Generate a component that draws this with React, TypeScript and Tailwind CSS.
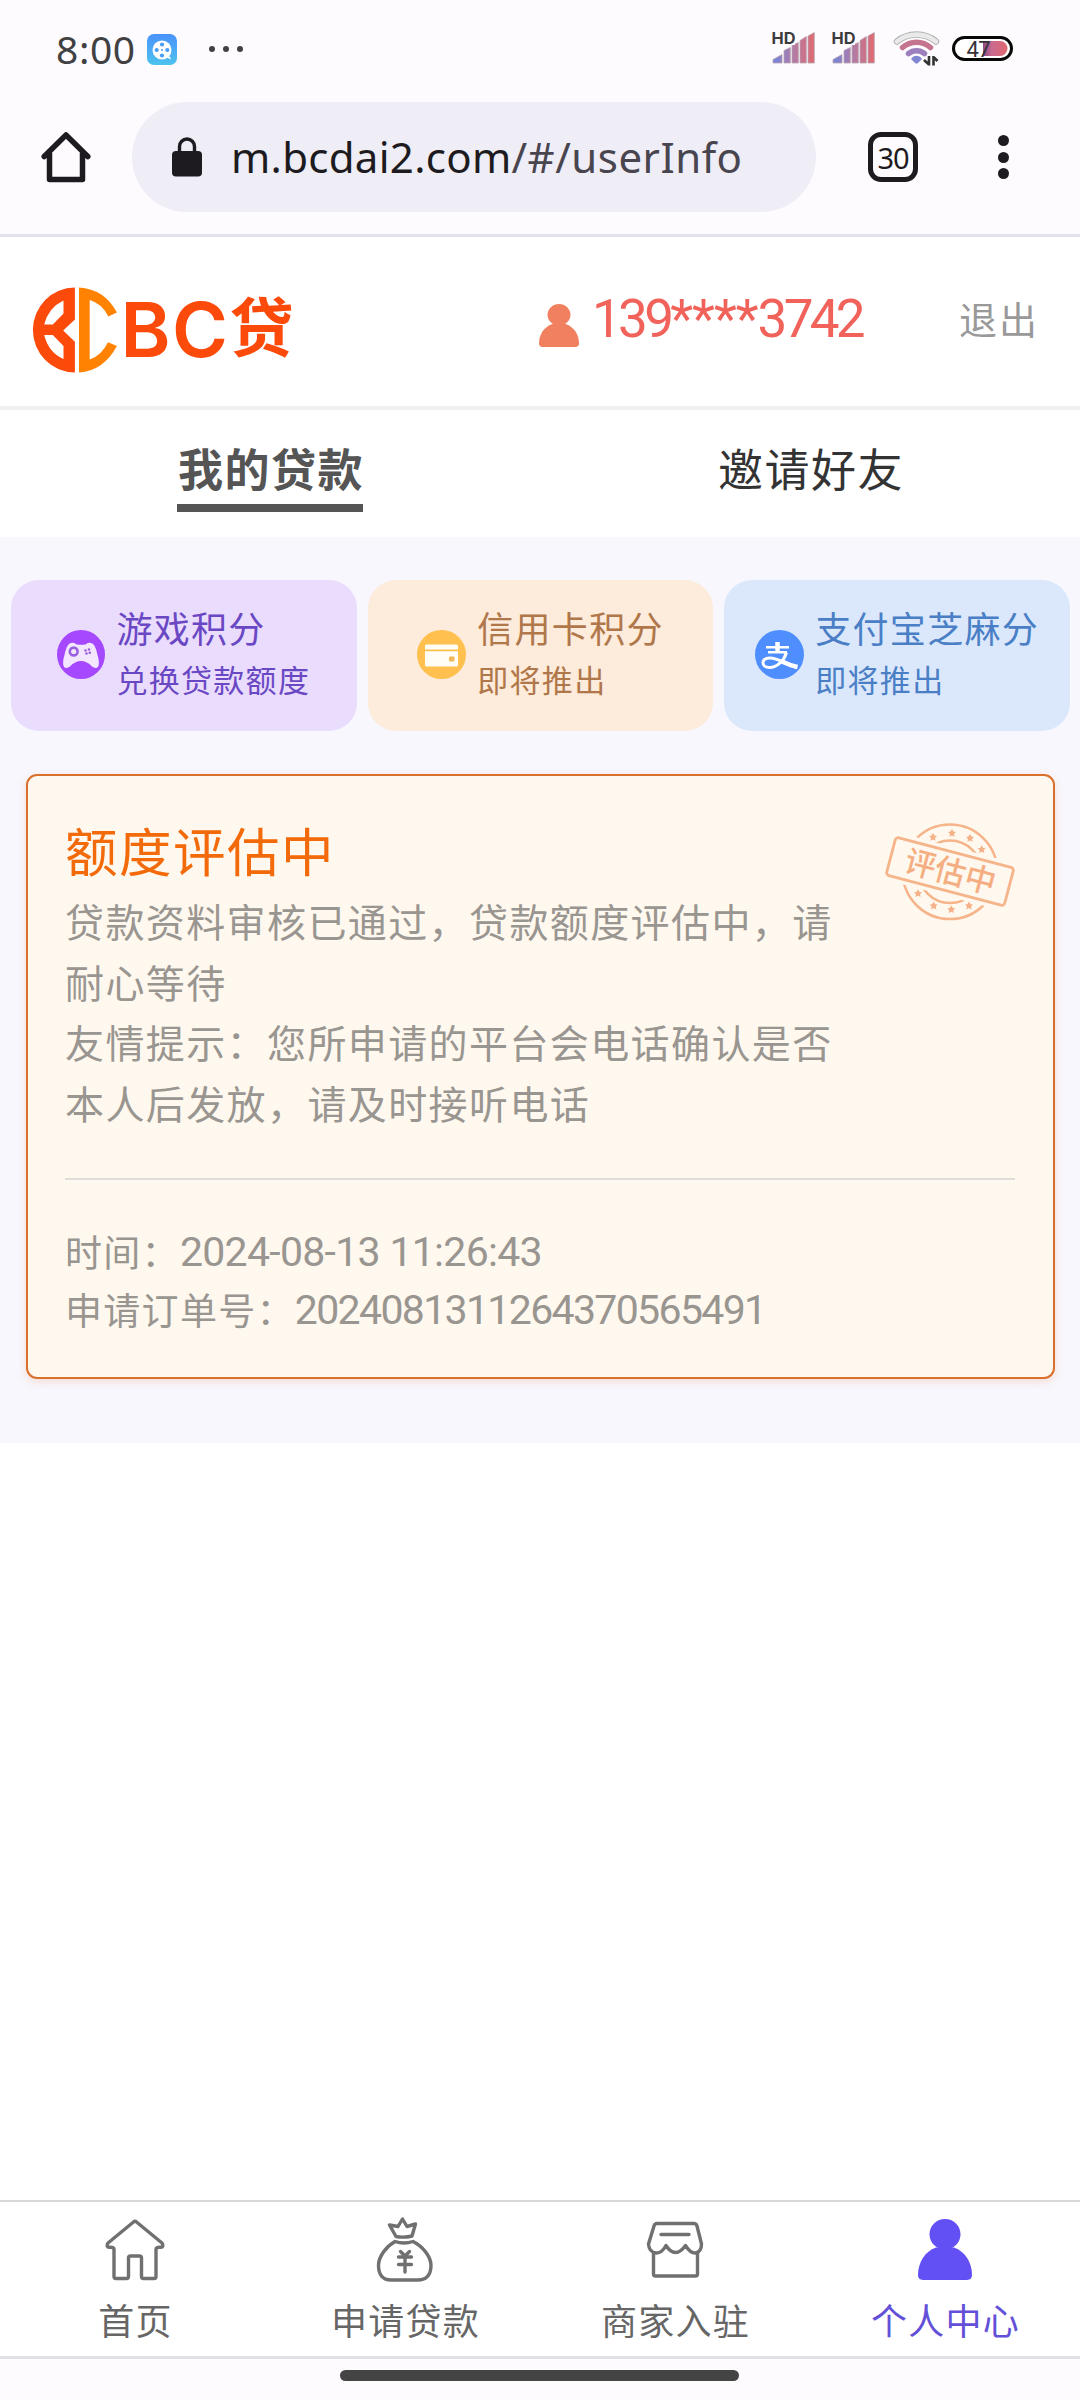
import React from "react";

const CJK = "font-['Noto_Sans_CJK_SC',sans-serif]";

function SignalIcon() {
  return (
    <svg width="44" height="34" viewBox="0 0 44 34" className="block overflow-visible">
      <defs>
        <linearGradient id="sig" gradientUnits="userSpaceOnUse" x1="0" x2="44" y1="0" y2="0">
          <stop offset="0.1" stopColor="#7b83d6" />
          <stop offset="0.5" stopColor="#b47ba4" />
          <stop offset="0.95" stopColor="#df6a72" />
        </linearGradient>
      </defs>
      <g fill="url(#sig)" stroke="#b9a3ae" strokeWidth="0.8">
        <path d="M1 31V27.500l9-5V31z" />
        <path d="M12 31V18.500l6.300-3V31z" />
        <path d="M20 31V13.500l6.300-3V31z" />
        <path d="M28 31V8.500l6.300-4V31z" />
        <path d="M36 31V4l6.300-3.500V31z" />
      </g>
      <rect x="0" y="0" width="23" height="13" fill="#fefbff" />
      <text x="-0.500" y="12" fontSize="16" fontWeight="700" fontFamily="Inter, sans-serif" fill="#3c3c3e" textLength="24" lengthAdjust="spacingAndGlyphs">HD</text>
    </svg>
  );
}

function WifiIcon() {
  return (
    <svg width="46" height="36" viewBox="0 0 46 36" className="block overflow-visible">
      <g fill="none">
        <path d="M3 10.500A31 31 0 0 1 42 10.500" stroke="#b0b0b2" strokeWidth="6.500" strokeLinecap="round" />
        <path d="M3 10.500A31 31 0 0 1 42 10.500" stroke="#e9e9e9" strokeWidth="4.800" strokeLinecap="round" />
        <path d="M8.500 16.500A21 21 0 0 1 36.500 16.500" stroke="#c4748c" strokeWidth="5.500" strokeLinecap="round" />
        <path d="M14.500 22.500A13 13 0 0 1 30.500 22.500" stroke="#9b80bd" strokeWidth="5.500" strokeLinecap="round" />
      </g>
      <path d="M17.500 27q5-4.500 10 0v1.500l-4 4h-2l-4-4z" fill="#8087d2" />
      <path d="M35 25v9.500M30 29l5 4.500M39.500 34.500V25M39.500 26l4 4" stroke="#333" strokeWidth="2.600" />
    </svg>
  );
}

function BatteryIcon() {
  return (
    <svg width="61" height="26" viewBox="0 0 61 26" className="block">
      <defs>
        <linearGradient id="bat" x1="0" x2="1" y1="0" y2="0">
          <stop offset="0" stopColor="#8a4e86" />
          <stop offset="0.35" stopColor="#c96a90" />
          <stop offset="1" stopColor="#e0686e" />
        </linearGradient>
      </defs>
      <rect x="1.500" y="1.500" width="58" height="22" rx="11" fill="#fff" stroke="#080808" strokeWidth="3" />
      <path d="M31 5h17a7.500 7.500 0 0 1 0 15H31z" fill="url(#bat)" />
      <text x="14.500" y="21" fontSize="22" fontFamily="Roboto, sans-serif" fill="#37313a" textLength="24">47</text>
    </svg>
  );
}

function StatusBar() {
  return (
    <div className="flex h-[98px] items-center pl-[56px] pr-[67px]">
      <span className="-mt-[1px] w-[91px] font-['Noto_Sans',sans-serif] text-[39px] leading-[50px] tracking-[0.6px] text-[#414143]">8:00</span>
      <svg width="30" height="31" viewBox="0 0 30 31">
        <defs>
          <linearGradient id="app" x1="0" x2="0" y1="0" y2="1">
            <stop offset="0" stopColor="#4a92fb" />
            <stop offset="1" stopColor="#4cc3ee" />
          </linearGradient>
        </defs>
        <rect width="30" height="31" rx="7" fill="url(#app)" />
        <circle cx="15" cy="16" r="9.500" fill="#fff" />
        <path d="M19 23l5 2.500-1-3z" fill="#fff" />
        <g fill="#4a9df5">
          <circle cx="15" cy="10.500" r="2.100" />
          <circle cx="15" cy="21.500" r="2.100" />
          <circle cx="9.700" cy="16" r="2.100" />
          <circle cx="20.300" cy="16" r="2.100" />
          <circle cx="15" cy="16" r="1" />
        </g>
      </svg>
      <div className="ml-[32px] flex gap-[8px]">
        <i className="size-[6px] rounded-full bg-[#414143]" />
        <i className="size-[6px] rounded-full bg-[#414143]" />
        <i className="size-[6px] rounded-full bg-[#414143]" />
      </div>
      <div className="ml-auto flex items-center">
        <SignalIcon />
        <div className="ml-[16px]"><SignalIcon /></div>
        <div className="ml-[18px]"><WifiIcon /></div>
        <div className="ml-[12px]"><BatteryIcon /></div>
      </div>
    </div>
  );
}

function BrowserBar() {
  return (
    <div className="flex h-[139px] items-center border-b-[3px] border-[#e3e1e9] pb-[18px] pl-[41px]">
      <svg width="50" height="52" viewBox="0 0 50 52" fill="none" stroke="#1d1b20" strokeWidth="5.500" strokeLinejoin="round" strokeLinecap="round">
        <path d="M3.200 25.500L25 4l21.800 21.500M8.500 22v26.500h33V22" />
      </svg>
      <div className="ml-[41px] flex h-[110px] w-[684px] items-center rounded-full bg-[#efedf6] pl-[40px]">
        <svg width="30" height="40" viewBox="0 0 30 40">
          <rect y="14" width="30" height="25.500" rx="4" fill="#1d1b20" />
          <path d="M7.500 15V9.500a7.500 7.500 0 0 1 15 0V15" fill="none" stroke="#1d1b20" strokeWidth="3.400" />
        </svg>
        <span className="ml-[29px] whitespace-nowrap font-['Noto_Sans',sans-serif] text-[42px] leading-[60px] tracking-[0.300px] text-[#1d1b20]">
          m.bcdai2.com<span className="tracking-[0.500px] text-[#49454f]">/#/userInfo</span>
        </span>
      </div>
      <div className="ml-[52px] flex size-[50px] items-center justify-center rounded-[13px] border-[5.500px] border-[#1d1b20] font-['Noto_Sans',sans-serif] text-[29px] leading-none tracking-[-1px] text-[#1d1b20]">
        30
      </div>
      <div className="ml-[79.500px] flex flex-col gap-[5.500px]">
        <i className="size-[11px] rounded-full bg-[#1d1b20]" />
        <i className="size-[11px] rounded-full bg-[#1d1b20]" />
        <i className="size-[11px] rounded-full bg-[#1d1b20]" />
      </div>
    </div>
  );
}

function PersonIcon({ className }: { className: string }) {
  return (
    <svg viewBox="0 0 54 62" preserveAspectRatio="none" className={className} fill="currentColor">
      <circle cx="27" cy="15.500" r="15.500" />
      <path d="M18 29h18C47 33 54 44 54 57q0 5-5 5H5q-5 0-5-5C0 44 7 33 18 29z" />
    </svg>
  );
}

function Logo() {
  return (
    <div className="flex h-[86px] items-start">
      <svg width="86" height="86" viewBox="31.500 286.500 86 86" className="block shrink-0">
        <path
          fill="#fb4a0a"
          fillRule="evenodd"
          d="M74.400 287V319L62.700 330L74.400 341.300V372A42 42.500 0 0 1 74.400 287ZM43.700 324H52.300L63 313V300Q48 307 43.700 324ZM43.700 334.500H52.300L63 345.500V358.500Q48 352 43.700 334.500Z"
        />
        <path fill="#ff8300" d="M78.500 287Q104 288.500 116.400 312L107.800 316Q101.500 303 89.200 299.500V359Q101 355 107.500 341.700L116.400 345.500Q103 370.500 78.500 372Z" />
      </svg>
      <span className="-mt-[1px] ml-[3px] font-[Inter,sans-serif] text-[76px] font-semibold leading-[86px] tracking-[1.400px] text-[#fb4a0a]">BC</span>
      <span className={`${CJK} -mt-[7px] text-[64px] font-bold leading-[86px] text-[#fb4a0a]`}>贷</span>
    </div>
  );
}

function Header() {
  return (
    <div className="flex h-[173px] items-start border-b-[4px] border-[#f0f0f1] pl-[31.500px] pr-[41px] pt-[49.500px]">
      <Logo />
      <div className="ml-auto flex h-[66px] items-center text-[#f0625a]">
        <PersonIcon className="mt-[11px] h-[43px] w-[40px] text-[#f08060]" />
        <span className="ml-[13px] w-[367px] whitespace-nowrap font-[Roboto,sans-serif] text-[53px] leading-[67px] tracking-[-3.700px]">
          139<span className="tracking-[-1px]">****</span>3742
        </span>
      </div>
      <span className={`${CJK} text-[38px] leading-[62px] tracking-[2px] text-[#999]`}>退出</span>
    </div>
  );
}

function Tabs() {
  return (
    <div className={`${CJK} flex h-[127px] pt-[24px] text-[45px] leading-[68px]`}>
      <div className="flex w-1/2 justify-center">
        <div className="h-[78px] w-[186px] whitespace-nowrap border-b-[8px] border-[#555] pl-[1px] text-center font-bold tracking-[1.500px] text-[#555]">我的贷款</div>
      </div>
      <div className="w-1/2 pl-[2px] text-center tracking-[1.500px] text-[#333]">邀请好友</div>
    </div>
  );
}

function PointCard({ icon, title, sub, className }: { icon: React.ReactNode; title: string; sub: string; className: string }) {
  return (
    <div className={`${CJK} flex h-[151px] flex-1 items-center justify-center gap-[11px] whitespace-nowrap rounded-[28px] ${className}`}>
      {icon}
      <div className="-mt-[6px]">
        <div className="text-[36px] leading-[51px] tracking-[1.300px]">{title}</div>
        <div className="text-[31px] leading-[51px] tracking-[1.300px]">{sub}</div>
      </div>
    </div>
  );
}

function GameIcon() {
  return (
    <svg width="48" height="49" viewBox="0 0 48 49" className="-mt-[2px] block shrink-0">
      <ellipse cx="24" cy="24.500" rx="24" ry="24.500" fill="#a548ff" />
      <path d="M12 14q4-2.500 7 .3 5 1 10 0 3-2.800 7-.3 3 3 4.500 11 2.500 8 .5 12-2.500 2-6-.5-5-5.500-11-5.500t-11 5.500q-3.500 2.500-6 .5-2-4 .5-12 1.500-8 4.500-11z" fill="#f3e6ff" />
      <circle cx="16.700" cy="21.500" r="3.900" fill="none" stroke="#9a5fe0" strokeWidth="2.600" />
      <g fill="#9a5fe0">
        <circle cx="28.500" cy="20.500" r="1.300" />
        <circle cx="32" cy="19.500" r="1.300" />
        <circle cx="29.500" cy="23.500" r="1.300" />
        <circle cx="32.800" cy="22.800" r="1.300" />
      </g>
    </svg>
  );
}

function CardIcon() {
  return (
    <svg width="49" height="49" viewBox="0 0 49 49" className="-mt-[2px] block shrink-0">
      <circle cx="24.500" cy="24.500" r="24.500" fill="#ffc04f" />
      <path d="M8 16q0-1.500 1.500-1.500h30q1.500 0 1.500 1.500v3.500H8zM8 21.300h33V35q0 1.500-1.500 1.500h-30Q8 36.500 8 35z" fill="#fffdf6" />
      <rect x="32" y="26.500" width="5.500" height="5" rx="1" fill="#f0b85a" />
    </svg>
  );
}

function AlipayIcon() {
  return (
    <svg width="49" height="49" viewBox="0 0 49 49" className="-mt-[2px] block shrink-0">
      <circle cx="24.500" cy="24.500" r="24.500" fill="#4f8eff" />
      <g fill="none" stroke="#fff">
        <path d="M22.500 12v10" strokeWidth="4.500" />
        <path d="M11 17.200h23M13 22.300h19" strokeWidth="2.400" />
        <path d="M31.500 22.500C29 31 22 37.500 14.500 37.500 6 37.500 5.500 28 14.500 28 22 28 28 32 42 37.500" strokeWidth="3" />
        <path d="M27 31.500q7 3.500 15.500 5.500" strokeWidth="4.500" />
      </g>
    </svg>
  );
}

const STARS = [
  [55, 14], [74, 10], [92, 15], [103.7, 26.3],
  [40, 70.3], [55.7, 82.6], [73.3, 86.3], [91, 82.6],
];

function Stamp() {
  return (
    <svg width="131" height="98" viewBox="0 0 131 98" className="block">
      <g fill="none" stroke="#f6b48a" strokeWidth="2.500">
        <circle cx="65" cy="48.800" r="47.300" />
        <circle cx="65" cy="48.800" r="31.300" />
      </g>
      <g transform="translate(-7 0)" fill="#f5b187">
        {STARS.map(([x, y], i) => (
          <path key={i} transform={`translate(${x} ${y})`} d="M0-4 1.500-1.400 4-1 2 1 2.600 3.800 0 2.400-2.600 3.800-2 1-4-1-1.500-1.400z" />
        ))}
      </g>
      <g transform="translate(65 48.500) rotate(14.800)">
        <rect x="-66" y="-24.500" width="132" height="49" fill="#fff8ee" />
        <rect x="-61" y="-19.500" width="122" height="39" rx="3" fill="none" stroke="#f6b48a" strokeWidth="2.800" />
        <text x="0.500" y="11.300" textAnchor="middle" fontSize="31" fontWeight="500" fontFamily="'Noto Sans CJK SC', sans-serif" fill="#f5ae82">评估中</text>
      </g>
    </svg>
  );
}

function LoanCard() {
  return (
    <div className={`${CJK} mx-[25.500px] mt-[43px] h-[605px] rounded-[11px] border-[2px] border-[#d9702c] bg-[#fff8ee] px-[37.500px] shadow-[0_3px_8px_rgba(250,120,60,0.2)]`}>
      <div className="flex h-[404px] items-start justify-between border-b-[2px] border-[#dfdcd9]">
        <div className="mt-[38px]">
          <div className="text-[52.500px] leading-[70px] tracking-[1.500px] text-[#f26a0a]">额度评估中</div>
          <p className="mt-[6px] w-[780px] text-[39px] leading-[60.700px] tracking-[1.400px] text-[#999590]">
            贷款资料审核已通过，贷款额度评估中，请
            <br />
            耐心等待
            <br />
            友情提示：您所申请的平台会电话确认是否
            <br />
            本人后发放，请及时接听电话
          </p>
        </div>
        <div className="-mr-[1px] mt-[47px]"><Stamp /></div>
      </div>
      <div className="mt-[42px] whitespace-nowrap text-[37px] leading-[58px] tracking-[1.300px] text-[#999590]">
        <div className="flex h-[58px]">
          <span>时间：</span>
          <span className="pt-[1px] font-[Roboto,sans-serif] text-[41px] tracking-[-0.700px]">2024-08-13 11:26:43</span>
        </div>
        <div className="flex h-[58px]">
          <span>申请订单号：</span>
          <span className="pt-[1px] font-[Roboto,sans-serif] text-[41px] tracking-[-1.650px]">2024081311264370565491</span>
        </div>
      </div>
    </div>
  );
}

function NavItem({ icon, label, active }: { icon: React.ReactNode; label: string; active?: boolean }) {
  return (
    <div className={`${CJK} flex flex-1 flex-col items-center pt-[16px] ${active ? "text-[#6350d8]" : "text-[#666]"}`}>
      <div className="flex h-[64px] items-center justify-center">{icon}</div>
      <div className="mt-[10px] pl-[1px] text-[36px] leading-[54px] tracking-[1.200px]">{label}</div>
    </div>
  );
}

function BottomNav() {
  const stroke = { fill: "none", stroke: "#707070", strokeWidth: 3.4, strokeLinejoin: "round" as const, strokeLinecap: "round" as const };
  return (
    <div className="flex h-[156px] border-t-[2px] border-[#d7d9d8]">
      <NavItem
        label="首页"
        icon={
          <svg width="62" height="64" viewBox="0 0 62 64" {...stroke}>
            <path d="M29.500 4q1.500-1.500 3 0L58 25q2.500 4-1.500 4.300-4.500-.3-4.500 1.700v27.500q0 2-2 2H39.500q-2 0-2-2V40q0-2-2-2h-9q-2 0-2 2v18.500q0 2-2 2H12q-2 0-2-2V31q0-2-4.500-1.700Q1.500 29 4 25z" />
          </svg>
        }
      />
      <NavItem
        label="申请贷款"
        icon={
          <svg width="62" height="66" viewBox="0 0 62 66" {...stroke}>
            <path d="M22 19.500L15.500 8l8.500 1.500L28.500 2 33 9.500 41.500 7 38 19Q30 21 22 19.500z" />
            <path d="M21 24.500q9 3 18 0C48 29 57 39 57 48.500 57 59 51 63 44 63H17C9 63 4.500 58 4.500 48.500 4.500 39 13 29 21 24.500z" />
            <path d="M26.500 34.500l4.500 4.500 4.500-4.500M24.500 40h13M24.500 47.500h13M31 40v15" />
          </svg>
        }
      />
      <NavItem
        label="商家入驻"
        icon={
          <svg width="62" height="64" viewBox="0 0 62 64" {...stroke}>
            <path d="M10 8q.8-2.500 3-2.500h37q2.200 0 3 2.500l4.500 18q0 8-6 9-5 .5-10-7.500-5 7-10 7-5 0-9.500-7-4.500 8-10 7.500-7-1-7.500-9z" />
            <path d="M9.500 35v21q0 2 2 2h40q2 0 2-2V35M17 16.500h28" />
          </svg>
        }
      />
      <NavItem label="个人中心" active icon={<PersonIcon className="mb-[2px] h-[61px] w-[54px] text-[#6250f4]" />} />
    </div>
  );
}

export default function App() {
  return (
    <div className="flex h-[2400px] w-[1080px] flex-col overflow-hidden bg-white">
      <div className="h-[237px] bg-[#fefbff]">
        <StatusBar />
        <BrowserBar />
      </div>
      <Header />
      <Tabs />
      <div className="h-[906px] bg-[#f7f7fd] pt-[43px]">
        <div className="flex gap-[11px] pl-[11px] pr-[10px]">
          <PointCard title="游戏积分" sub="兑换贷款额度" className="bg-[#eadcfc] text-[#6a48c4]" icon={<GameIcon />} />
          <PointCard title="信用卡积分" sub="即将推出" className="bg-[#fdebdb] text-[#b0774a]" icon={<CardIcon />} />
          <PointCard title="支付宝芝麻分" sub="即将推出" className="bg-[#dbe8fb] text-[#4a7fc6]" icon={<AlipayIcon />} />
        </div>
        <LoanCard />
      </div>
      <div className="flex-1" />
      <BottomNav />
      <div className="flex h-[44px] justify-center border-t-[3px] border-[#e3e0ea] bg-[#fefbff] pr-[1px] pt-[11px]">
        <div className="h-[11px] w-[399px] rounded-full bg-[#444]" />
      </div>
    </div>
  );
}
